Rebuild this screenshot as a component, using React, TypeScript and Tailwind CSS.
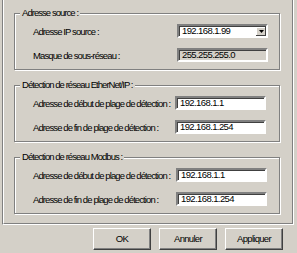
const font = { fontFamily: '"Liberation Sans", Arial, sans-serif' };

function GroupBox({ title, children }: { title: string; children: React.ReactNode }) {
  return (
    <div className="relative w-[266px] h-[57px] border border-[#808080] shadow-[inset_1px_1px_0_#fff,1px_1px_0_#fff]">
      <span className="absolute left-[5px] -top-[7px] px-[2px] bg-[#d4d0c8] text-[9.5px] leading-[12px] tracking-[-0.95px] text-black">
        {title}
      </span>
      <div className="flex flex-col gap-[10px] pt-[10px] pl-[18px]">{children}</div>
    </div>
  );
}

function Row({ label, labelWidth, children }: { label: string; labelWidth: string; children: React.ReactNode }) {
  return (
    <div className="flex items-end h-[14px]">
      <span className={`${labelWidth} text-[9.5px] leading-[12px] tracking-[-0.9px] text-black whitespace-nowrap`}>{label}</span>
      {children}
    </div>
  );
}

function Field({ value, disabled }: { value: string; disabled?: boolean }) {
  return (
    <div
      className={`w-[91px] h-[14px] border-2 border-t-[#808080] border-l-[#808080] border-b-white border-r-white shadow-[inset_1px_1px_0_#404040] flex items-center pl-[3px] text-[9.5px] tracking-[-0.6px] text-black ${
        disabled ? "bg-[#d4d0c8]" : "bg-white"
      }`}
    >
      {value}
    </div>
  );
}

function Combo({ value }: { value: string }) {
  return (
    <div className="w-[91px] h-[14px] border-2 border-t-[#808080] border-l-[#808080] border-b-white border-r-white bg-white flex items-stretch text-[9.5px] tracking-[-0.6px] text-black">
      <div className="flex-1 flex items-center pl-[2px] border-t border-l border-[#404040]">{value}</div>
      <div className="w-[10px] bg-[#d4d0c8] border-t border-[#404040] shadow-[inset_-1px_-1px_0_#404040,inset_1px_1px_0_#fff] flex items-center justify-center">
        <svg width="5" height="3" viewBox="0 0 5 3">
          <path d="M0 0h5L2.5 3z" fill="#000" />
        </svg>
      </div>
    </div>
  );
}

function Button({ label }: { label: string }) {
  return (
    <div className="w-[58px] h-[22px] bg-[#d4d0c8] border border-t-white border-l-white border-b-[#404040] border-r-[#404040] shadow-[inset_-1px_-1px_0_#808080] flex items-center justify-center text-[9.5px] tracking-[-0.7px] text-black">
      {label}
    </div>
  );
}

export default function App() {
  return (
    <div className="w-[297px] h-[253px] bg-[#d4d0c8] overflow-hidden" style={font}>
      <div className="ml-[2px] w-[292px] h-[225px] border-l border-l-[#808080] border-r border-r-white border-b border-b-white">
        <div className="h-full border-l border-l-white border-r border-r-[#808080] border-b border-b-[#808080] pt-[13px] pl-[10px] flex flex-col gap-[15px]">
          <GroupBox title="Adresse source :">
            <Row label="Adresse IP source :" labelWidth="w-[144px]">
              <Combo value="192.168.1.99" />
            </Row>
            <Row label="Masque de sous-réseau :" labelWidth="w-[144px]">
              <Field value="255.255.255.0" disabled />
            </Row>
          </GroupBox>
          <GroupBox title="Détection de réseau EtherNet/IP :">
            <Row label="Adresse de début de plage de détection :" labelWidth="w-[142px]">
              <Field value="192.168.1.1" />
            </Row>
            <Row label="Adresse de fin de plage de détection :" labelWidth="w-[142px]">
              <Field value="192.168.1.254" />
            </Row>
          </GroupBox>
          <GroupBox title="Détection de réseau Modbus :">
            <Row label="Adresse de début de plage de détection :" labelWidth="w-[143px]">
              <Field value="192.168.1.1" />
            </Row>
            <Row label="Adresse de fin de plage de détection :" labelWidth="w-[143px]">
              <Field value="192.168.1.254" />
            </Row>
          </GroupBox>
        </div>
      </div>
      <div className="flex gap-[8px] pl-[93px] pt-[3px]">
        <Button label="OK" />
        <Button label="Annuler" />
        <Button label="Appliquer" />
      </div>
    </div>
  );
}
